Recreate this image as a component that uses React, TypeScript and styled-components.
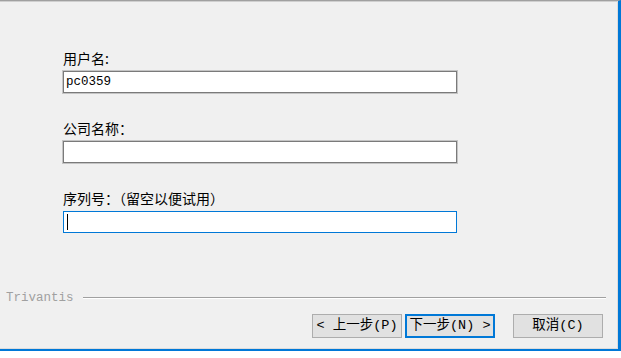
import React from 'react';
import styled, { createGlobalStyle } from 'styled-components';

const GlobalStyle = createGlobalStyle`
  html, body {
    margin: 0;
    padding: 0;
    background: #fff;
  }
  * {
    box-sizing: border-box;
  }
`;

const CJK = `"Noto Sans CJK SC", "Noto Sans", sans-serif`;
const MONO = `"Liberation Mono", "Noto Sans CJK SC", monospace`;

const Dialog = styled.div`
  display: flex;
  flex-direction: column;
  width: 621px;
  height: 351px;
  background: #f0f0f0;
  border-top: 1px solid #a0a0a0;
  border-right: 3px solid #0078d7;
  border-bottom: 2px solid #0078d7;
  box-shadow: inset -1px -1px 0 #dcdcdc, inset 0 1px 0 #cfcfcf;
  font-family: ${CJK};
  color: #000;
`;

const Form = styled.div`
  display: flex;
  flex-direction: column;
  gap: 27px;
  padding: 49px 0 0 63px;
`;

const Field = styled.div`
  display: flex;
  flex-direction: column;
  gap: 4px;
`;

const Label = styled.label`
  font-size: 14px;
  line-height: 17px;
  height: 17px;
  white-space: nowrap;
`;

const Input = styled.div<{ $focused?: boolean }>`
  width: 394px;
  height: 22px;
  background: #fff;
  border: 1px solid ${(p) => (p.$focused ? '#0078d7' : '#7a7a7a')};
  box-shadow: 0 0 0 ${(p) => (p.$focused ? '0' : '1px')} #c4c4c4;
  display: flex;
  align-items: center;
  padding-left: 2px;
  font-family: ${MONO};
  font-size: 12.5px;
`;

const Caret = styled.span`
  display: inline-block;
  width: 1px;
  height: 16px;
  margin-left: 1px;
  background: #000;
`;

const Spacer = styled.div`
  flex: 1;
`;

const Brand = styled.div`
  display: flex;
  align-items: center;
  gap: 9px;
  padding: 0 12px 0 6px;
  height: 14px;
`;

const BrandName = styled.span`
  font-family: ${MONO};
  font-size: 12.5px;
  color: #a0a0a0;
`;

const Rule = styled.div`
  flex: 1;
  border-top: 1px solid #a0a0a0;
  border-bottom: 1px solid #fff;
`;

const Buttons = styled.div`
  display: flex;
  justify-content: flex-end;
  padding: 9px 15px 11px 0;
`;

const Button = styled.button<{ $default?: boolean; $gap?: number }>`
  width: 90px;
  height: 24px;
  margin-left: ${(p) => p.$gap ?? 0}px;
  padding: 0;
  background: #e1e1e1;
  border: ${(p) => (p.$default ? '2px solid #0078d7' : '1px solid #adadad')};
  font-family: ${MONO};
  font-size: 13.5px;
  line-height: 20px;
  color: #000;
  white-space: nowrap;
`;

const App: React.FC = () => {
  return (
    <>
      <GlobalStyle />
      <Dialog>
        <Form>
          <Field>
            <Label>用户名:</Label>
            <Input>pc0359</Input>
          </Field>
          <Field>
            <Label>公司名称：</Label>
            <Input />
          </Field>
          <Field>
            <Label>序列号：（留空以便试用）</Label>
            <Input $focused>
              <Caret />
            </Input>
          </Field>
        </Form>
        <Spacer />
        <Brand>
          <BrandName>Trivantis</BrandName>
          <Rule />
        </Brand>
        <Buttons>
          <Button>&lt; 上一步(P)</Button>
          <Button $default $gap={3}>下一步(N) &gt;</Button>
          <Button $gap={18}>取消(C)</Button>
        </Buttons>
      </Dialog>
    </>
  );
};

export default App;
